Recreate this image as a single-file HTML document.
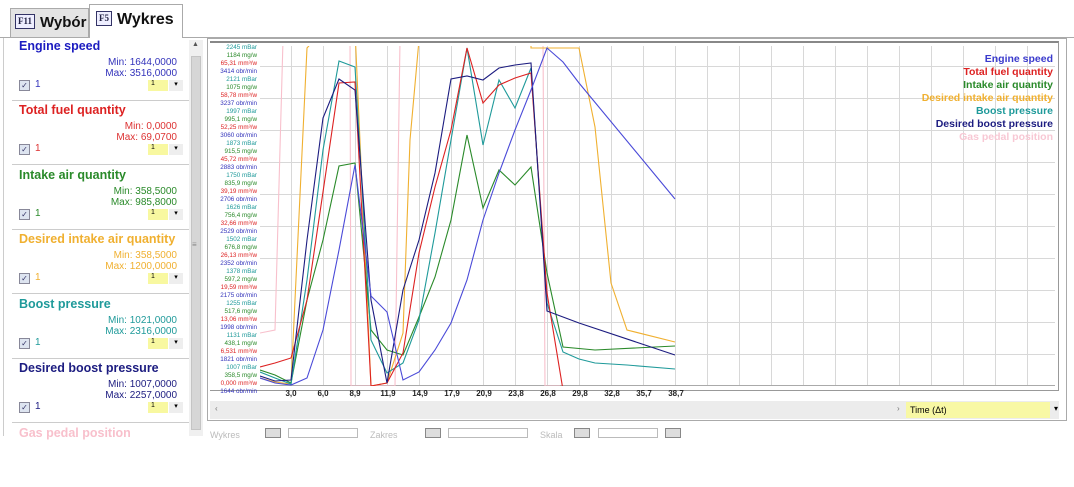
<!DOCTYPE html>
<html><head><meta charset="utf-8"><style>
*{margin:0;padding:0;box-sizing:border-box}
body{width:1074px;height:436px;overflow:hidden;background:#fff;font-family:"Liberation Sans",Arial,sans-serif;position:relative}
.abs{position:absolute}
.tab{position:absolute;border:1px solid #aaa;border-bottom:none;font-weight:bold;font-size:16px;color:#111;white-space:nowrap}
.key{display:inline-block;border:1px solid #336;background:#eef;font-size:9px;font-family:"Liberation Serif",serif;padding:1px 2px;margin-right:5px;vertical-align:3px;color:#224;line-height:11px}
.item{position:absolute;left:12px;width:177px;height:64px;border-bottom:1px solid #ccc}
.item .t{position:absolute;left:7px;top:2px;font-weight:bold;font-size:12.5px;white-space:nowrap}
.item .mm{position:absolute;right:12px;font-size:10px}
.item .cb{position:absolute;left:7px;top:43px;width:11px;height:11px;border:1px solid #889;background:#dde4f0;font-size:8px;line-height:9px;text-align:center;color:#336}
.item .one{position:absolute;left:23px;top:42px;font-size:10px}
.item .sel{position:absolute;left:136px;top:43px;width:20px;height:11px;background:#f8f8a0;font-size:7px;padding-left:3px}
.item .dd{position:absolute;left:157px;top:43px;width:14px;height:11px;background:#eee;font-size:7px;text-align:center}
</style></head><body>
<div class="abs" style="left:0;top:37px;width:1074px;height:1px;background:#aaa"></div>
<div class="tab" style="left:10px;top:8px;width:79px;height:29px;background:#e4e4e4;padding:5px 0 0 4px;font-size:15px"><span class="key">F11</span>Wybór</div>
<div class="tab" style="left:89px;top:4px;width:94px;height:34px;background:#fff;padding:6px 0 0 6px"><span class="key">F5</span>Wykres</div>

<div class="abs" style="left:3px;top:38px;width:1px;height:398px;background:#ccc"></div>
<div class="item" style="top:37px"><div class="t" style="color:#1c1cc0">Engine speed</div><div class="mm" style="top:20px;color:#3333bb">Min: 1644,0000</div><div class="mm" style="top:31px;color:#3333bb">Max: 3516,0000</div><div class="cb">✓</div><div class="one" style="color:#3333bb">1</div><div class="sel">1</div><div class="dd">▾</div></div>
<div class="item" style="top:101px"><div class="t" style="color:#dd2222">Total fuel quantity</div><div class="mm" style="top:20px;color:#dd3333">Min: 0,0000</div><div class="mm" style="top:31px;color:#dd3333">Max: 69,0700</div><div class="cb">✓</div><div class="one" style="color:#dd3333">1</div><div class="sel">1</div><div class="dd">▾</div></div>
<div class="item" style="top:166px"><div class="t" style="color:#2a8a2a">Intake air quantity</div><div class="mm" style="top:20px;color:#2a8a2a">Min: 358,5000</div><div class="mm" style="top:31px;color:#2a8a2a">Max: 985,8000</div><div class="cb">✓</div><div class="one" style="color:#2a8a2a">1</div><div class="sel">1</div><div class="dd">▾</div></div>
<div class="item" style="top:230px"><div class="t" style="color:#f0b030">Desired intake air quantity</div><div class="mm" style="top:20px;color:#f0b030">Min: 358,5000</div><div class="mm" style="top:31px;color:#f0b030">Max: 1200,0000</div><div class="cb">✓</div><div class="one" style="color:#f0b030">1</div><div class="sel">1</div><div class="dd">▾</div></div>
<div class="item" style="top:295px"><div class="t" style="color:#1f9a9a">Boost pressure</div><div class="mm" style="top:20px;color:#1f9a9a">Min: 1021,0000</div><div class="mm" style="top:31px;color:#1f9a9a">Max: 2316,0000</div><div class="cb">✓</div><div class="one" style="color:#1f9a9a">1</div><div class="sel">1</div><div class="dd">▾</div></div>
<div class="item" style="top:359px"><div class="t" style="color:#1c1c80">Desired boost pressure</div><div class="mm" style="top:20px;color:#1c1c80">Min: 1007,0000</div><div class="mm" style="top:31px;color:#1c1c80">Max: 2257,0000</div><div class="cb">✓</div><div class="one" style="color:#1c1c80">1</div><div class="sel">1</div><div class="dd">▾</div></div>
<div class="item" style="top:423px;border:none"><div class="t" style="color:#f8c0cc;top:3px">Gas pedal position</div></div>
<div class="abs" style="left:189px;top:40px;width:14px;height:396px;background:#f0f0f0"></div>
<div class="abs" style="left:191px;top:56px;width:10px;height:374px;background:#d6d6d6;border:1px solid #c4c4c4"></div>
<div class="abs" style="left:192px;top:41px;font-size:7px;color:#555">▲</div>
<div class="abs" style="left:192px;top:240px;font-size:8px;color:#888">≡</div>

<div class="abs" style="left:207px;top:38px;width:860px;height:383px;border:1px solid #aaa"></div>
<div class="abs" style="left:210px;top:41px;width:849px;height:350px;border:1px solid #999;border-left:none;border-top:2px solid #888"></div>
<div class="abs" style="left:210px;top:401px;width:849px;height:18px;background:#ececec"></div>
<div class="abs" style="left:215px;top:404px;font-size:8px;color:#777">‹</div>
<div class="abs" style="left:897px;top:404px;font-size:8px;color:#777">›</div>
<div class="abs" style="left:906px;top:402px;width:144px;height:16px;background:#f8f8a4;font-size:9px;padding:3px 0 0 4px">Time (Δt)</div>
<div class="abs" style="left:1054px;top:404px;font-size:8px">▾</div>

<svg class="abs" style="left:0;top:0" width="1074" height="436">
<defs><clipPath id="c"><rect x="260" y="46" width="795" height="340"/></clipPath></defs>
<g stroke="#d8d8d8" stroke-width="1">
<line x1="291.5" y1="46" x2="291.5" y2="386"/><line x1="323.5" y1="46" x2="323.5" y2="386"/><line x1="355.5" y1="46" x2="355.5" y2="386"/><line x1="387.5" y1="46" x2="387.5" y2="386"/><line x1="419.5" y1="46" x2="419.5" y2="386"/><line x1="451.5" y1="46" x2="451.5" y2="386"/><line x1="483.5" y1="46" x2="483.5" y2="386"/><line x1="515.5" y1="46" x2="515.5" y2="386"/><line x1="547.5" y1="46" x2="547.5" y2="386"/><line x1="579.5" y1="46" x2="579.5" y2="386"/><line x1="611.5" y1="46" x2="611.5" y2="386"/><line x1="643.5" y1="46" x2="643.5" y2="386"/><line x1="675.5" y1="46" x2="675.5" y2="386"/><line x1="707.5" y1="46" x2="707.5" y2="386"/><line x1="739.5" y1="46" x2="739.5" y2="386"/><line x1="771.5" y1="46" x2="771.5" y2="386"/><line x1="803.5" y1="46" x2="803.5" y2="386"/><line x1="835.5" y1="46" x2="835.5" y2="386"/><line x1="867.5" y1="46" x2="867.5" y2="386"/><line x1="899.5" y1="46" x2="899.5" y2="386"/><line x1="931.5" y1="46" x2="931.5" y2="386"/><line x1="963.5" y1="46" x2="963.5" y2="386"/><line x1="995.5" y1="46" x2="995.5" y2="386"/><line x1="1027.5" y1="46" x2="1027.5" y2="386"/>
<line x1="260" y1="66.5" x2="1055" y2="66.5"/><line x1="260" y1="98.5" x2="1055" y2="98.5"/><line x1="260" y1="130.5" x2="1055" y2="130.5"/><line x1="260" y1="162.5" x2="1055" y2="162.5"/><line x1="260" y1="194.5" x2="1055" y2="194.5"/><line x1="260" y1="226.5" x2="1055" y2="226.5"/><line x1="260" y1="258.5" x2="1055" y2="258.5"/><line x1="260" y1="290.5" x2="1055" y2="290.5"/><line x1="260" y1="322.5" x2="1055" y2="322.5"/><line x1="260" y1="354.5" x2="1055" y2="354.5"/>
</g>
<line x1="260" y1="385.5" x2="1055" y2="385.5" stroke="#aaa"/>
<g clip-path="url(#c)" fill="none" stroke-width="1.1">
<polyline stroke="#f8c0cc" points="260,333 275,330 283,40 350,40 351,386 395,386 400,40 543,40 545,386 560,386"/>
<polyline stroke="#f0b030" points="260,378 275,382 291,384 307,48 323,30 339,30 355,30 371,386 387,383 403,333 410,140 419,40 531,40 531,48 579,48 595,127 611,283 627,330 675,342"/>
<polyline stroke="#2a8a2a" points="260,370 275,375 291,383 307,300 323,240 339,166 355,163 371,330 387,350 403,355 419,317 435,277 451,220 467,135 483,208 499,170 515,185 531,167 547,273 563,347 595,350 675,346"/>
<polyline stroke="#1f9a9a" points="260,372 275,378 291,384 307,280 323,150 339,61 355,67 371,340 387,373 403,363 419,320 435,233 451,140 467,48 483,145 499,80 515,108 531,68 547,303 563,352 579,359 595,363 627,365 675,369"/>
<polyline stroke="#dd2222" points="260,367 275,363 291,358 307,300 323,192 339,83 355,82 371,386 387,383 403,353 419,253 435,187 451,130 467,48 483,103 499,85 515,78 531,73 547,293 563,390"/>
<polyline stroke="#1c1c80" points="260,376 275,381 291,380 307,240 323,118 339,79 355,90 371,300 387,383 403,290 419,240 435,173 451,79 467,76 483,80 499,68 515,65 531,63 547,311 579,323 675,355"/>
<polyline stroke="#4a4ad8" points="260,378 275,383 291,385 307,378 323,330 339,250 355,165 371,296 380,305 387,312 403,380 419,372 435,350 451,323 467,280 483,220 499,173 515,130 531,90 547,48 563,62 579,83 675,199"/>
</g>
<g font-size="6.3" text-anchor="end" font-family="Liberation Sans,sans-serif">
<text x="257" y="49" fill="#1f9a9a">2245 mBar</text><text x="257" y="57" fill="#2a8a2a">1184 mg/w</text><text x="257" y="65" fill="#dd2222">65,31 mm³/w</text><text x="257" y="73" fill="#3333bb">3414 obr/min</text>
<text x="257" y="81" fill="#1f9a9a">2121 mBar</text><text x="257" y="89" fill="#2a8a2a">1075 mg/w</text><text x="257" y="97" fill="#dd2222">58,78 mm³/w</text><text x="257" y="105" fill="#3333bb">3237 obr/min</text>
<text x="257" y="113" fill="#1f9a9a">1997 mBar</text><text x="257" y="121" fill="#2a8a2a">995,1 mg/w</text><text x="257" y="129" fill="#dd2222">52,25 mm³/w</text><text x="257" y="137" fill="#3333bb">3060 obr/min</text>
<text x="257" y="145" fill="#1f9a9a">1873 mBar</text><text x="257" y="153" fill="#2a8a2a">915,5 mg/w</text><text x="257" y="161" fill="#dd2222">45,72 mm³/w</text><text x="257" y="169" fill="#3333bb">2883 obr/min</text>
<text x="257" y="177" fill="#1f9a9a">1750 mBar</text><text x="257" y="185" fill="#2a8a2a">835,9 mg/w</text><text x="257" y="193" fill="#dd2222">39,19 mm³/w</text><text x="257" y="201" fill="#3333bb">2706 obr/min</text>
<text x="257" y="209" fill="#1f9a9a">1626 mBar</text><text x="257" y="217" fill="#2a8a2a">756,4 mg/w</text><text x="257" y="225" fill="#dd2222">32,66 mm³/w</text><text x="257" y="233" fill="#3333bb">2529 obr/min</text>
<text x="257" y="241" fill="#1f9a9a">1502 mBar</text><text x="257" y="249" fill="#2a8a2a">676,8 mg/w</text><text x="257" y="257" fill="#dd2222">26,13 mm³/w</text><text x="257" y="265" fill="#3333bb">2352 obr/min</text>
<text x="257" y="273" fill="#1f9a9a">1378 mBar</text><text x="257" y="281" fill="#2a8a2a">597,2 mg/w</text><text x="257" y="289" fill="#dd2222">19,59 mm³/w</text><text x="257" y="297" fill="#3333bb">2175 obr/min</text>
<text x="257" y="305" fill="#1f9a9a">1255 mBar</text><text x="257" y="313" fill="#2a8a2a">517,6 mg/w</text><text x="257" y="321" fill="#dd2222">13,06 mm³/w</text><text x="257" y="329" fill="#3333bb">1998 obr/min</text>
<text x="257" y="337" fill="#1f9a9a">1131 mBar</text><text x="257" y="345" fill="#2a8a2a">438,1 mg/w</text><text x="257" y="353" fill="#dd2222">6,531 mm³/w</text><text x="257" y="361" fill="#3333bb">1821 obr/min</text>
<text x="257" y="369" fill="#1f9a9a">1007 mBar</text><text x="257" y="377" fill="#2a8a2a">358,5 mg/w</text><text x="257" y="385" fill="#dd2222">0,000 mm³/w</text><text x="257" y="393" fill="#3333bb">1644 obr/min</text>
</g>
<g font-size="8" font-weight="bold" text-anchor="middle" fill="#222">
<text x="291" y="396">3,0</text><text x="323" y="396">6,0</text><text x="355" y="396">8,9</text><text x="388" y="396">11,9</text><text x="420" y="396">14,9</text><text x="452" y="396">17,9</text><text x="484" y="396">20,9</text><text x="516" y="396">23,8</text><text x="548" y="396">26,8</text><text x="580" y="396">29,8</text><text x="612" y="396">32,8</text><text x="644" y="396">35,7</text><text x="676" y="396">38,7</text>
</g>
<g font-size="10.5" font-weight="bold" text-anchor="end">
<text x="1053" y="62" fill="#3a3acc">Engine speed</text><text x="1053" y="75" fill="#dd2222">Total fuel quantity</text><text x="1053" y="88" fill="#2a8a2a">Intake air quantity</text><text x="1053" y="101" fill="#f0b030">Desired intake air quantity</text><text x="1053" y="114" fill="#1f9a9a">Boost pressure</text><text x="1053" y="127" fill="#1c1c80">Desired boost pressure</text><text x="1053" y="140" fill="#f8c8d4">Gas pedal position</text>
</g>
</svg>
<div class="abs" style="left:210px;top:430px;font-size:9px;color:#bbb">Wykres</div>
<div class="abs" style="left:265px;top:428px;width:16px;height:10px;background:#ddd;border:1px solid #888"></div>
<div class="abs" style="left:288px;top:428px;width:70px;height:10px;border:1px solid #bbb"></div>
<div class="abs" style="left:370px;top:430px;font-size:9px;color:#bbb">Zakres</div>
<div class="abs" style="left:425px;top:428px;width:16px;height:10px;background:#ddd;border:1px solid #888"></div>
<div class="abs" style="left:448px;top:428px;width:80px;height:10px;border:1px solid #bbb"></div>
<div class="abs" style="left:540px;top:430px;font-size:9px;color:#bbb">Skala</div>
<div class="abs" style="left:574px;top:428px;width:16px;height:10px;background:#ddd;border:1px solid #888"></div>
<div class="abs" style="left:598px;top:428px;width:60px;height:10px;border:1px solid #bbb"></div>
<div class="abs" style="left:665px;top:428px;width:16px;height:10px;background:#ddd;border:1px solid #888"></div>
</body></html>
